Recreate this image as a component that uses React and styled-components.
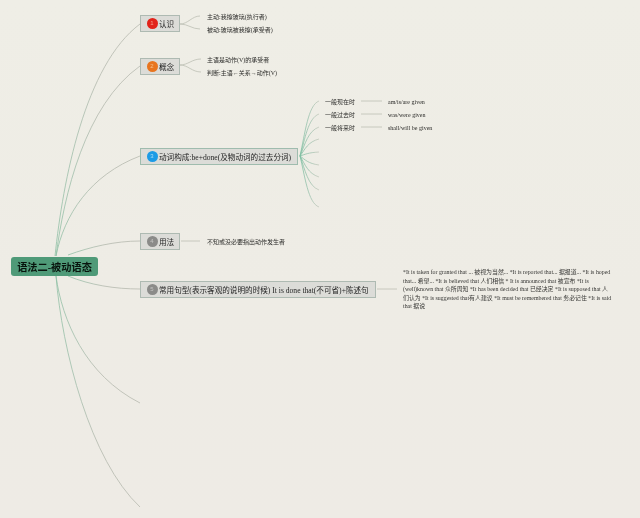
import React from "react";
import styled, { createGlobalStyle } from "styled-components";

const Global = createGlobalStyle`
  html, body { margin: 0; padding: 0; background: #eeece5; }
  body { width: 640px; height: 518px; overflow: hidden; }
`;

const Canvas = styled.div`
  position: relative;
  width: 640px;
  height: 518px;
  overflow: hidden;
  background: linear-gradient(180deg, #efeee6 0%, #eeece5 55%, #eeebe5 100%);
  font-family: "Liberation Serif", "Noto Sans CJK SC", serif;
  filter: blur(0.35px);
`;

const Wires = styled.svg`
  position: absolute;
  inset: 0;
`;

const Root = styled.div`
  position: absolute;
  left: 11px;
  top: 257px;
  width: 87px;
  height: 19px;
  display: flex;
  align-items: center;
  justify-content: center;
  background: #4f9a78;
  border-radius: 3px;
  color: #08140d;
  font-size: 10.2px;
  font-weight: 700;
  white-space: nowrap;
`;

const Branch = styled.div`
  position: absolute;
  left: 140px;
  top: ${(p) => p.$top}px;
  height: 17px;
  display: flex;
  align-items: center;
  gap: 27px;
`;

const Topic = styled.div`
  box-sizing: border-box;
  flex: none;
  width: ${(p) => p.$width}px;
  height: 17px;
  display: flex;
  align-items: center;
  padding-left: 5.5px;
  background: #dcdcd8;
  border: 1px solid ${(p) => p.$edge || "#aebab2"};
  color: #242424;
  font-size: 7.6px;
  white-space: nowrap;
`;

const Badge = styled.span`
  flex: none;
  width: 11px;
  height: 11px;
  margin-right: 1.5px;
  border-radius: 50%;
  background: ${(p) => p.$color};
  color: ${(p) => p.$ink};
  font-size: 6px;
  line-height: 11px;
  text-align: center;
  font-family: "Liberation Sans", sans-serif;
`;

const Leaves = styled.div`
  display: flex;
  flex-direction: column;
  gap: 3px;
`;

const Leaf = styled.div`
  height: 10px;
  line-height: 10px;
  color: #2c2c2a;
  font-size: 6px;
  white-space: nowrap;
`;

const Note = styled.div`
  flex: none;
  width: 210px;
  color: #363634;
  font-size: 5.9px;
  line-height: 8.6px;
`;

const TenseTable = styled.div`
  position: absolute;
  left: 325px;
  top: 95px;
  display: grid;
  grid-template-columns: 63px auto;
  grid-auto-rows: 13px;
  align-items: center;
`;

const topics = [
  {
    top: 15, width: 40, color: "#e2231a", ink: "#f2a08e", n: 1, text: "认识",
    leaves: ["主动:我擦玻璃(执行者)", "被动:玻璃被我擦(承受者)"],
  },
  {
    top: 58, width: 40, color: "#e8751f", ink: "#f4c08e", n: 2, text: "概念",
    leaves: ["主语是动作(V)的承受者", "判断:主语←关系→动作(V)"],
  },
  {
    top: 148, width: 158, color: "#1c9be6", ink: "#a8dcf6", n: 3,
    text: "动词构成:be+done(及物动词的过去分词)", edge: "#9fbcae",
    leaves: [],
  },
  {
    top: 233, width: 40, color: "#8b8b89", ink: "#c4c4c2", n: 4, text: "用法",
    leaves: ["不知或没必要指出动作发生者"],
  },
  {
    top: 281, width: 236, color: "#8b8b89", ink: "#c4c4c2", n: 5,
    text: "常用句型(表示客观的说明的时候) It is done that(不可省)+陈述句",
    note: "*It is taken for granted that ... 被视为当然... *It is reported that... 据报道... *It is hoped that... 希望... *It is believed that 人们相信 * It is announced that 被宣布 *It is (well)known that 众所周知 *It has been decided that 已经决定 *It is supposed that 人们认为 *It is suggested that有人建议 *It must be remembered that 务必记住 *It is said that 据说",
  },
];

const tenses = [
  ["一般现在时", "am/is/are given"],
  ["一般过去时", "was/were given"],
  ["一般将来时", "shall/will be given"],
];

const mainCurves = [
  "M55 256 C63 180 85 65 140 24",
  "M56 256 C64 195 85 105 140 66",
  "M56 256 C64 215 90 175 140 156",
  "M68 255 C90 247 115 241 140 241",
  "M68 276 C90 285 115 289 140 289",
  "M56 276 C62 320 85 375 140 403",
  "M56 276 C62 350 90 460 140 507",
];

const fanEnds = [101, 114, 127, 139, 152, 165, 177, 190, 207];

const fanPath = (y) => {
  const dy = y - 156;
  const bend = Math.sign(dy) * Math.min(4, Math.abs(dy) / 6);
  return `M300 156 C305 ${156 + dy * 0.4} 308 ${y - bend} 319 ${y}`;
};

const sideCurves = [
  "M180 24 C188 24 192 16 200 16",
  "M180 24 C188 24 192 29 200 29",
  "M180 65 C188 65 192 59 201 59",
  "M180 65 C188 65 192 72 201 72",
  "M181 241 L200 241",
  "M377 289 L397 289",
  "M361 101 L382 101",
  "M361 114 L382 114",
  "M361 127 L382 127",
];

export default function App() {
  return (
    <Canvas>
      <Global />
      <Wires width="640" height="518" viewBox="0 0 640 518" fill="none">
        <defs>
          <linearGradient id="wire" x1="0" y1="0" x2="1" y2="0">
            <stop offset="0" stopColor="#8fc0a5" />
            <stop offset="0.25" stopColor="#a3bdab" />
            <stop offset="0.5" stopColor="#b3b8ad" />
            <stop offset="1" stopColor="#b7b9af" />
          </linearGradient>
          <linearGradient id="fan" x1="0" y1="0" x2="1" y2="0">
            <stop offset="0" stopColor="#7fbfa2" />
            <stop offset="0.5" stopColor="#9cc2ae" />
            <stop offset="1" stopColor="#c4c8bc" />
          </linearGradient>
        </defs>
        {mainCurves.map((d) => (
          <path key={d} d={d} stroke="url(#wire)" strokeWidth="0.8" />
        ))}
        {fanEnds.map((y) => (
          <path key={y} d={fanPath(y)} stroke="url(#fan)" strokeWidth="0.8" />
        ))}
        {sideCurves.map((d) => (
          <path key={d} d={d} stroke="#bcbfb4" strokeWidth="0.8" />
        ))}
      </Wires>
      <Root>语法二-被动语态</Root>
      {topics.map((t) => (
        <Branch key={t.n} $top={t.top}>
          <Topic $width={t.width} $edge={t.edge}>
            <Badge $color={t.color} $ink={t.ink}>{t.n}</Badge>
            {t.text}
          </Topic>
          {t.leaves && t.leaves.length > 0 && (
            <Leaves>
              {t.leaves.map((l) => (
                <Leaf key={l}>{l}</Leaf>
              ))}
            </Leaves>
          )}
          {t.note && <Note>{t.note}</Note>}
        </Branch>
      ))}
      <TenseTable>
        {tenses.map(([name, form]) => (
          <React.Fragment key={name}>
            <Leaf>{name}</Leaf>
            <Leaf>{form}</Leaf>
          </React.Fragment>
        ))}
      </TenseTable>
    </Canvas>
  );
}
